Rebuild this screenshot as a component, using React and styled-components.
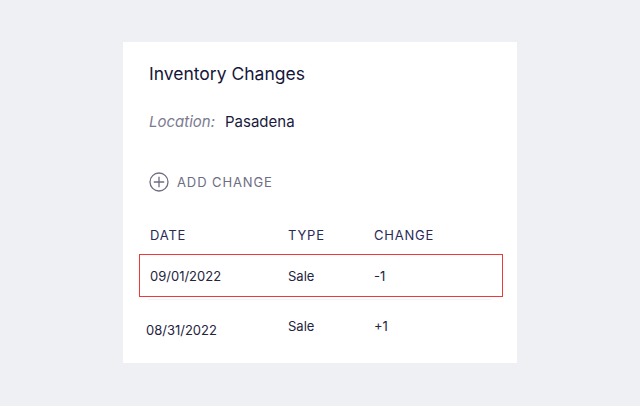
import React from "react";
import styled, { createGlobalStyle } from "styled-components";

const GlobalStyle = createGlobalStyle`
  html, body {
    margin: 0;
    padding: 0;
    background: #eff0f4;
    font-family: Inter, "Open Sans", sans-serif;
  }
`;

const Page = styled.div`
  width: 640px;
  height: 406px;
  padding: 42px 0 0 123px;
  box-sizing: border-box;
`;

const Card = styled.div`
  width: 394px;
  height: 321px;
  background: #ffffff;
  box-sizing: border-box;
  padding: 20px 14px 0 16px;
  display: flex;
  flex-direction: column;
`;

const Title = styled.h3`
  margin: 0 0 0 10px;
  font-size: 17.5px;
  line-height: 24px;
  font-weight: 400;
  color: #16163a;
`;

const LocationLine = styled.div`
  margin: 24px 0 0 10px;
  display: flex;
  gap: 10px;
  font-size: 15px;
  line-height: 24px;
`;

const Label = styled.span`
  font-style: italic;
  color: #7b7b90;
`;

const Value = styled.span`
  color: #1a1a3c;
`;

const AddButton = styled.button`
  margin: 38px 0 0 10px;
  padding: 0;
  border: none;
  background: none;
  display: flex;
  align-items: center;
  gap: 8px;
  align-self: flex-start;
  font-family: inherit;
  font-size: 13px;
  letter-spacing: 0.9px;
  color: #6d6d84;
  cursor: pointer;
`;

const Table = styled.div`
  margin-top: 30px;
  display: flex;
  flex-direction: column;
`;

const Row = styled.div`
  display: grid;
  grid-template-columns: 138px 86px 1fr;
  align-items: center;
  box-sizing: border-box;
  padding-left: 10px;
  height: ${(p) => p.$height}px;
  border: 1.5px solid ${(p) => (p.$selected ? "#ec3b36" : "transparent")};
  font-size: 13px;
  color: #24243e;
`;

const HeaderCell = styled.div`
  text-transform: uppercase;
  letter-spacing: 0.8px;
  color: #2a2a58;
`;

const Cell = styled.div`
  position: relative;
  top: ${(p) => p.$dy || 0}px;
  left: ${(p) => p.$dx || 0}px;
`;

const Divider = styled.div`
  height: 1px;
  margin: 2px 12px 0 9px;
  background: #f1f1f5;
`;

const PlusCircle = () => (
  <svg width="20" height="20" viewBox="0 0 20 20" fill="none" stroke="#6d6d84" strokeWidth="1.3">
    <circle cx="10" cy="10" r="9" />
    <path d="M10 4.8v10.4M4.8 10h10.4" />
  </svg>
);

const rows = [
  { date: "09/01/2022", type: "Sale", change: "-1", selected: true },
  { date: "08/31/2022", type: "Sale", change: "+1", selected: false },
];

export default function App() {
  return (
    <>
      <GlobalStyle />
      <Page>
        <Card>
          <Title>Inventory Changes</Title>
          <LocationLine>
            <Label>Location:</Label>
            <Value>Pasadena</Value>
          </LocationLine>
          <AddButton>
            <PlusCircle />
            ADD CHANGE
          </AddButton>
          <Table>
            <Row $height={26}>
              <HeaderCell>Date</HeaderCell>
              <HeaderCell>Type</HeaderCell>
              <HeaderCell>Change</HeaderCell>
            </Row>
            <Row $height={43} $selected style={{ marginTop: 6 }}>
              <Cell>{rows[0].date}</Cell>
              <Cell>{rows[0].type}</Cell>
              <Cell>{rows[0].change}</Cell>
            </Row>
            <Divider />
            <Row $height={52}>
              <Cell $dx={-4} $dy={4}>{rows[1].date}</Cell>
              <Cell>{rows[1].type}</Cell>
              <Cell>{rows[1].change}</Cell>
            </Row>
          </Table>
        </Card>
      </Page>
    </>
  );
}
